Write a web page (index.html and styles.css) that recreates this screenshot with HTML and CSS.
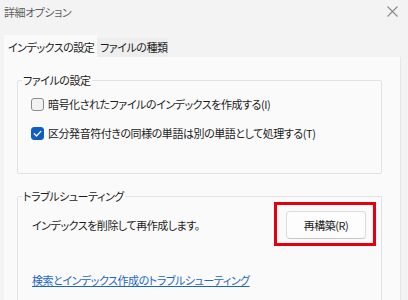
FILE: index.html
```html
<!DOCTYPE html>
<html lang="ja">
<head>
<meta charset="utf-8">
<link rel="stylesheet" href="styles.css">
</head>
<body>
<div class="window">
  <div class="titlebar">
    <span class="title">詳細オプション</span>
    <svg class="close" width="11" height="11" viewBox="0 0 11 11"><path d="M0.5 0.5 L10.5 10.5 M10.5 0.5 L0.5 10.5" stroke="#8a8a8a" stroke-width="1.1" fill="none"/></svg>
  </div>
  <div class="tabs">
    <div class="tab active">インデックスの設定</div>
    <div class="tab">ファイルの種類</div>
  </div>
  <div class="panel">
    <fieldset class="group g1">
      <legend>ファイルの設定</legend>
      <label class="check-row first"><span class="box"></span><span>暗号化されたファイルのインデックスを作成する(I)</span></label>
      <label class="check-row second"><span class="box checked"><svg width="13" height="13" viewBox="0 0 13 13"><path d="M3.3 6.8 L5.5 9 L9.8 4.4" stroke="#fff" stroke-width="1.3" fill="none" stroke-linecap="round" stroke-linejoin="round"/></svg></span><span>区分発音符付きの同様の単語は別の単語として処理する(T)</span></label>
    </fieldset>
    <fieldset class="group g2">
      <legend>トラブルシューティング</legend>
      <div class="rebuild-row">
        <span>インデックスを削除して再作成します。</span>
        <div class="btn-wrap"><button class="btn">再構築(R)</button></div>
      </div>
      <a class="link" href="#">検索とインデックス作成のトラブルシューティング</a>
    </fieldset>
  </div>
</div>
</body>
</html>
```
FILE: styles.css
```css
* { box-sizing: border-box; }
html, body { margin: 0; padding: 0; }
body {
  width: 408px;
  height: 300px;
  overflow: hidden;
  background: #f3f3f3;
  font-family: "Noto Sans CJK JP", "Noto Sans", sans-serif;
  font-size: 11px;
  letter-spacing: -0.45px;
  line-height: 16px;
  color: #1b1b1b;
  font-feature-settings: "palt";
}
.window { width: 408px; height: 300px; }
.titlebar {
  height: 35px;
  display: flex;
  justify-content: space-between;
  align-items: flex-start;
  padding: 4px 10px 0 4px;
}
.title { color: #5f5f5f; }
.close { margin-top: 2px; }
.tabs {
  display: flex;
  align-items: flex-end;
  height: 22px;
  padding-left: 4px;
}
.tab {
  height: 19px;
  padding: 0 2px 0 3px;
  background: #eeeeee;
  line-height: 18px;
  white-space: nowrap;
  width: 71px;
}
.tab.active {
  height: 22px;
  background: #fafafa;
  padding: 3px 0 0 4px;
  width: 93px;
}
.panel {
  margin-left: 4px;
  width: 397px;
  height: 243px;
  background: #fafafa;
  border-right: 1px solid #e6e6e6;
  padding: 15px 0 0 13px;
}
.group {
  margin: 0;
  width: 365px;
  border: 1px solid #e2e2e2;
  border-radius: 2px;
  padding: 0 15px 0 4px;
  min-width: 0;
}
.group legend { padding: 0 1px; }
.g1 { padding-bottom: 32px; }
.check-row {
  display: flex;
  align-items: center;
  gap: 4px;
  margin-left: 9px;
  height: 16px;
}
.check-row.first { margin-top: 8px; }
.check-row.second { margin-top: 13px; }
.box {
  width: 13px;
  height: 13px;
  border: 1px solid #8c8c8c;
  border-radius: 3px;
  background: #f2f2f2;
  flex: none;
  display: block;
}
.box.checked {
  background: #0f5fc2;
  border-color: #0f5fc2;
  position: relative;
}
.box.checked svg { position: absolute; left: -1px; top: -1px; }
.g2 {
  margin-top: 14px;
  height: 114px;
  border-bottom: none;
  border-radius: 2px 2px 0 0;
}
.rebuild-row {
  display: flex;
  justify-content: space-between;
  align-items: center;
  margin-top: 7px;
  margin-left: 10px;
}
.btn-wrap { position: relative; }
.btn-wrap::after {
  content: "";
  position: absolute;
  top: -9px; left: -12px; right: -10px; bottom: -7px;
  border: 3px solid #e5000f;
}
.btn {
  width: 80px;
  height: 28px;
  font: inherit;
  letter-spacing: inherit;
  font-feature-settings: "palt";
  color: #1b1b1b;
  background: #fdfdfd;
  border: 1px solid #dcdcdc;
  border-bottom-color: #c8c8c8;
  border-radius: 4px;
  padding: 0;
}
.link {
  display: inline-block;
  margin-top: 33px;
  margin-left: 10px;
  color: #1d66c9;
  text-decoration: underline;
}
```
